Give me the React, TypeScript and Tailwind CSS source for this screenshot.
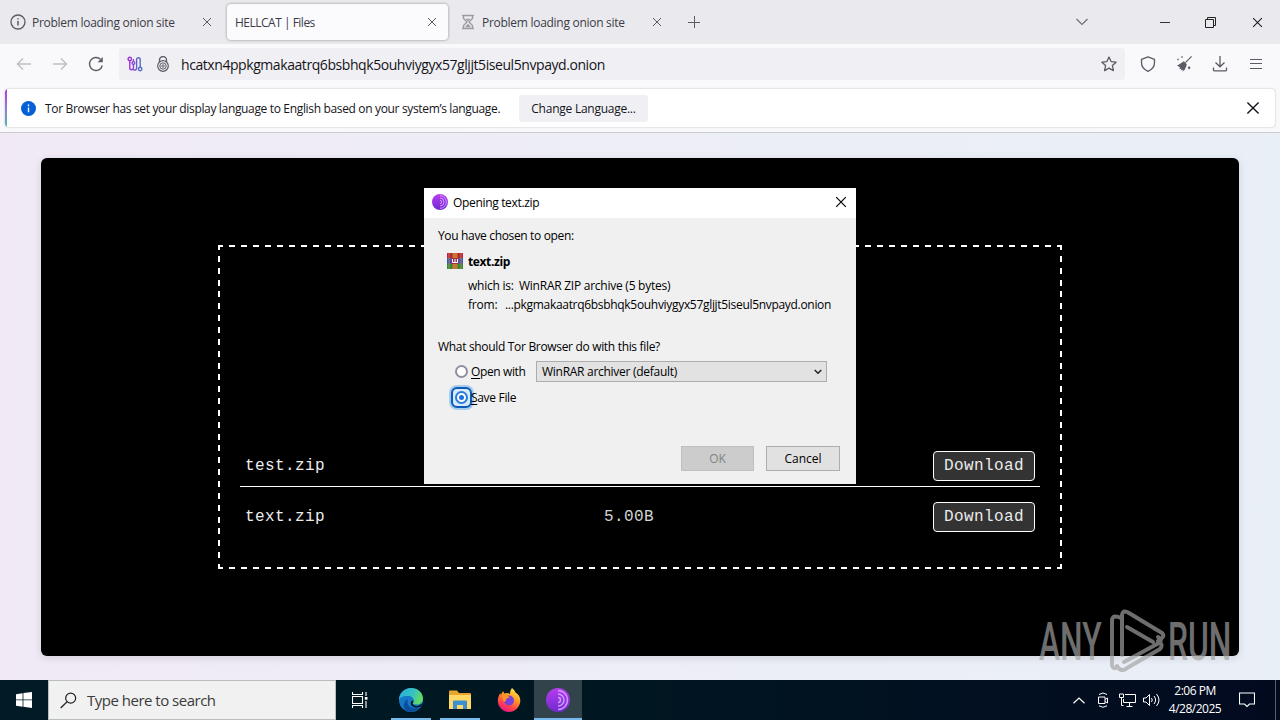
import type { ReactNode } from "react"

const address = "hcatxn4ppkgmakaatrq6bsbhqk5ouhviygyx57gljjt5iseul5nvpayd.onion"

const files = [
  { name: "test.zip", size: "" },
  { name: "text.zip", size: "5.00B" },
]

function CloseIcon({ className = "size-2.5 text-[#5b5b66]" }: { className?: string }) {
  return (
    <svg viewBox="0 0 10 10" className={className} fill="none" stroke="currentColor" strokeWidth="1">
      <path d="M1 1l8 8M9 1l-8 8" />
    </svg>
  )
}

function TorIcon({ className }: { className: string }) {
  return (
    <svg viewBox="0 0 24 24" className={className} fill="none">
      <defs>
        <linearGradient id="tor" x1="0" y1="0" x2="0" y2="1">
          <stop offset="0" stopColor="#b83cf0" />
          <stop offset="1" stopColor="#6f2ad0" />
        </linearGradient>
      </defs>
      <circle cx="12" cy="12" r="12" fill="url(#tor)" />
      <g stroke="#cf9bff" strokeWidth="1.5">
        <path d="M12 2.5a9.5 9.5 0 0 1 0 19" />
        <path d="M12 6a6 6 0 0 1 0 12" />
        <path d="M12 9.5a2.5 2.5 0 0 1 0 5" />
      </g>
    </svg>
  )
}

function TabBar() {
  return (
    <div className="flex h-11 items-center bg-[#eaeaee] text-[#3c3b46]">
      <div className="flex h-9 w-[227px] items-center pl-2.5 pr-[15px]">
        <svg viewBox="0 0 16 16" className="mr-1.5 size-4" fill="none" stroke="#5b5b66" strokeWidth="1.3">
          <circle cx="8" cy="8" r="7" />
          <path d="M8 7v4.5M8 4.2v1.4" strokeWidth="1.5" />
        </svg>
        <span className="flex-1 pt-0.5 tracking-[-0.28px]">Problem loading onion site</span>
        <CloseIcon />
      </div>
      <div className="flex h-9 w-[221px] items-center rounded bg-[#fbfbfe] pl-2 pr-[11px] shadow-[0_0_3px_rgba(0,0,0,0.4)]">
        <span className="flex-1 pt-0.5 tracking-[-0.5px]">HELLCAT | Files</span>
        <CloseIcon />
      </div>
      <div className="flex h-9 w-[226px] items-center pl-[13px] pr-3">
        <svg viewBox="0 0 14 16" className="mr-[7px] h-4 w-3.5" fill="none" stroke="#9b9ba3" strokeWidth="1.4">
          <path d="M1 1.5h12M1 14.5h12M2.5 2v2.5L6 8l-3.500 3.500V14M11.500 2v2.500L8 8l3.500 3.500V14" />
          <path d="M5 5h4L7 7zM4.500 13L7 10l2.500 3z" fill="#9b9ba3" strokeWidth=".5" />
        </svg>
        <span className="flex-1 pt-0.5 tracking-[-0.28px]">Problem loading onion site</span>
        <CloseIcon />
      </div>
      <svg viewBox="0 0 12 12" className="ml-[14px] size-3" stroke="#5b5b66" strokeWidth="1">
        <path d="M6.500 0v12M0 6.500h12" />
      </svg>
      <svg viewBox="0 0 12 8" className="ml-auto h-2 w-3" fill="none" stroke="#6f6e79" strokeWidth="1.2">
        <path d="M.5 1L6 6.500 11.500 1" />
      </svg>
      <div className="ml-[72px] h-px w-2.5 bg-[#33333d]" />
      <svg viewBox="0 0 11 11" className="ml-[35px] size-[11px]" fill="none" stroke="#222" strokeWidth="1">
        <path d="M.5 2.500h8v8h-8zM2.500 2.500v-2h8v8h-2" />
      </svg>
      <CloseIcon className="ml-9 mr-[17px] size-[11px] text-[#222]" />
    </div>
  )
}

function NavBar() {
  return (
    <div className="flex h-10 items-center bg-[#f9f9fb] text-[#5b5b66]">
      <svg viewBox="0 0 16 16" className="ml-4 size-4" fill="none" stroke="#bdbdc4" strokeWidth="1.4">
        <path d="M15 8H1.500M7 2.500L1.500 8 7 13.500" />
      </svg>
      <svg viewBox="0 0 16 16" className="ml-5 size-4" fill="none" stroke="#bdbdc4" strokeWidth="1.4">
        <path d="M1 8h13.500M9 2.500L14.500 8 9 13.500" />
      </svg>
      <svg viewBox="0 0 16 16" className="ml-5 size-4" fill="none" stroke="#5b5b66" strokeWidth="1.4">
        <path d="M14.300 9.500A6.500 6.500 0 1 1 12.500 3.300" />
        <path d="M14.800 1v5.200H9.600z" fill="#5b5b66" stroke="none" />
      </svg>
      <div className="ml-[15px] flex h-8 w-[1006px] items-center rounded-sm bg-[#f0f0f4] pl-2">
        <svg viewBox="0 0 16 16" className="size-4" fill="none" strokeWidth="1.4">
          <defs>
            <linearGradient id="circuit" gradientUnits="userSpaceOnUse" x1="0" y1="0" x2="16" y2="0">
              <stop offset="0" stopColor="#b421dc" />
              <stop offset="1" stopColor="#3f7fc0" />
            </linearGradient>
          </defs>
          <g stroke="url(#circuit)">
            <circle cx="2.800" cy="3" r="1.700" />
            <circle cx="13.200" cy="13" r="1.700" />
            <path d="M2.800 4.700v7.300a1.800 1.800 0 0 0 3.600 0V8.500M6.400 5.500V3M9.600 13.500V3.500a1.800 1.800 0 0 1 3.600 0v7.800M6.400 13.800q3.200 1 3.200-2" />
            <circle cx="6.400" cy="7" r="1.400" />
          </g>
        </svg>
        <svg viewBox="0 0 14 16" className="ml-[13px] h-4 w-3.5" fill="none" stroke="#5b5b66">
          <path d="M3.500 6V4a3.500 3.500 0 0 1 7 0v2" strokeWidth="1.3" />
          <circle cx="7" cy="10" r="5.300" strokeWidth="1.2" />
          <circle cx="7" cy="10" r="3.200" />
          <circle cx="7" cy="10" r="1.200" />
        </svg>
        <span className="ml-[11px] pt-0.5 text-[14px] tracking-[-0.43px] text-[#15141a]">{address}</span>
        <svg viewBox="0 0 16 16" className="ml-auto mr-2 size-4" fill="none" stroke="#5b5b66" strokeWidth="1.3" strokeLinejoin="round">
          <path d="M8 1l2.100 4.600 5 .6-3.700 3.400 1 5L8 12.100l-4.400 2.500 1-5L.9 6.200l5-.6z" />
        </svg>
      </div>
      <svg viewBox="0 0 16 16" className="ml-[15px] size-4" fill="none" stroke="currentColor" strokeWidth="1.3" strokeLinejoin="round">
        <path d="M8 .8l6.500 2.500v3.500c0 3.500-2.500 6.800-6.500 8.500-4-1.700-6.500-5-6.500-8.500V3.300z" />
      </svg>
      <svg viewBox="0 0 16 16" className="ml-5 size-4" fill="currentColor">
        <path d="M15.200 0l.8.8-6.200 6.200-.8-.8z" />
        <path d="M7.800 5.200l3 3-.6 2.300-1.500 3.300-2.200 1.700.2-2-2 .9.500-1.700-2 .2 1-1.500L1 9.500l2-1z" />
        <path d="M2 2.500l1 1-1 1-1-1zM6 0l1 1-1 1-1-1zM13 10l1.500 1.800L13 13.500 11.700 12z" />
      </svg>
      <svg viewBox="0 0 16 16" className="ml-5 size-4" fill="none" stroke="currentColor" strokeWidth="1.3">
        <path d="M8 0v10.500M3.500 6.500L8 10.800l4.500-4.300M1.500 11.500V14a.8.8 0 0 0 .8.8h11.400a.8.8 0 0 0 .8-.8v-2.500" />
      </svg>
      <svg viewBox="0 0 12 10" className="ml-[22px] h-2.5 w-3" stroke="currentColor" strokeWidth="1">
        <path d="M0 .5h12M0 4.500h12M0 9.500h12" />
      </svg>
    </div>
  )
}

function LanguageNotice() {
  return (
    <div className="h-[49px] border-b border-[#cccccf] bg-[#f9f9fb] px-[5px] pt-[5px]">
      <div className="flex h-[38px] items-center overflow-hidden rounded-sm bg-white text-[#15141a] shadow-[0_0_2px_rgba(58,57,68,0.35)]">
        <div className="h-full w-0.5 bg-linear-to-b from-[#b421dc] via-[#8f7bd8] to-[#39b8b8]" />
        <svg viewBox="0 0 16 16" className="ml-[14px] size-[15px]">
          <circle cx="8" cy="8" r="8" fill="#0560d8" />
          <path d="M8 7v5M8 3.800v1.700" stroke="#fff" strokeWidth="1.500" />
        </svg>
        <span className="ml-[9px] w-[474px] whitespace-nowrap pt-0.5 tracking-[-0.34px]">
          Tor Browser has set your display language to English based on your system’s language.
        </span>
        <button className="h-[27px] w-[129px] rounded-[3px] bg-[#f0f0f4] pt-0.5 tracking-[-0.25px]">Change Language...</button>
        <CloseIcon className="ml-auto mr-[15px] size-[14px] text-[#15141a]" />
      </div>
    </div>
  )
}

function FileList() {
  return (
    <div className="mt-[87px] flex h-[324px] w-[844px] flex-col">
      <div className="h-0.5 bg-[repeating-linear-gradient(90deg,#fff_0_5px,transparent_5px_11px,#fff_11px_12px)]" />
      <div className="flex h-[320px]">
        <div className="w-0.5 bg-[repeating-linear-gradient(180deg,#fff_0_3px,transparent_3px_8.85px,#fff_8.85px_11.85px)]" />
        <div className="flex flex-1 flex-col px-5 pt-[199px]">
          {files.map((file) => (
            <div
              key={file.name}
              className="grid h-[51px] grid-cols-[359px_1fr_auto] items-start border-white px-[5px] pt-[5px] font-['Liberation_Mono',monospace] text-base leading-[30px] tracking-[0.4px] text-[#ececec] not-last:h-[41px] not-last:border-b last:pt-[15px]"
            >
              <span>{file.name}</span>
              <span className="text-[#d4d4d4]">{file.size}</span>
              <button className="h-[30px] w-[102px] rounded border border-white bg-[#333] leading-7">Download</button>
            </div>
          ))}
        </div>
        <div className="w-0.5 bg-[repeating-linear-gradient(180deg,#fff_0_3px,transparent_3px_8.85px,#fff_8.85px_11.85px)]" />
      </div>
      <div className="h-0.5 bg-[repeating-linear-gradient(90deg,#fff_0_5px,transparent_5px_11px,#fff_11px_12px)]" />
    </div>
  )
}

function ArchiveIcon() {
  return (
    <svg viewBox="0 0 16 16" className="-mt-0.5 size-4">
      <path d="M0 0h16v5H0z" fill="#b3263b" />
      <path d="M0 5.500h16v5H0z" fill="#3657b5" />
      <path d="M0 11h16v5H0z" fill="#2f8a3c" />
      <path d="M0 5h16v.6H0zM0 10.500h16v.6H0z" fill="#222" />
      <path d="M5.500 0h5v16h-5z" fill="#c9772b" />
      <path d="M4.500 5h7v6h-7z" fill="#a4304c" />
      <path d="M5.500 6v3.500h5V6M8 6v3" fill="none" stroke="#fff" />
      <path d="M2 0v16M14 0v16" stroke="#e0a060" strokeWidth=".6" />
    </svg>
  )
}

function DialogButton({ children, disabled }: { children: ReactNode; disabled?: boolean }) {
  return (
    <button
      disabled={disabled}
      className="h-[25px] w-[74px] border border-[#adadad] bg-[#e1e1e1] pt-px disabled:w-[73px] disabled:border-[#bfbfbf] disabled:bg-[#ccc] disabled:text-[#838383]"
    >
      {children}
    </button>
  )
}

function OpenDialog() {
  return (
    <div className="absolute left-[424px] top-[188px] h-[296px] w-[432px] bg-[#f0f0f0] text-black">
      <div className="flex h-[30px] items-center bg-white pl-2 pr-[9px]">
        <TorIcon className="-mt-0.5 size-4" />
        <span className="ml-[5px] flex-1 tracking-[-0.33px]">Opening text.zip</span>
        <CloseIcon className="-mt-0.5 size-3 text-black" />
      </div>
      <div className="px-3.5 pt-[9px]">
        <p className="leading-[18px] tracking-[-0.34px]">You have chosen to open:</p>
        <div className="mt-2 flex items-center pl-[9px]">
          <ArchiveIcon />
          <span className="ml-[5px] font-bold leading-[18px] tracking-[-0.38px]">text.zip</span>
        </div>
        <div className="mt-[5px] flex items-baseline pl-[30px] leading-[19px]">
          <span className="w-[51px] tracking-[-0.25px]">which is:</span>
          <span className="tracking-[-0.25px]">WinRAR ZIP archive (5 bytes)</span>
        </div>
        <div className="flex items-baseline whitespace-nowrap pl-[30px] leading-[19px]">
          <span className="w-[37px] tracking-[-0.2px]">from:</span>
          <span className="tracking-[-0.31px]">...{address.slice(8)}</span>
        </div>
        <p className="mt-6 leading-[18px] tracking-[-0.32px]">What should Tor Browser do with this file?</p>
        <div className="mt-[5px] flex h-[21px] items-center pl-[17px]">
          <span className="size-[13px] rounded-full border-2 border-[#8f8f9d] bg-white" />
          <span className="ml-[3px] w-[65px] pt-px tracking-[-0.38px]">
            <u className="underline-offset-2">O</u>pen with
          </span>
          <div className="flex h-[21px] w-[291px] items-center border border-[#adadad] bg-[#e2e2e2] pl-[5px] pr-1">
            <span className="flex-1 pt-px tracking-[-0.28px]">WinRAR archiver (default)</span>
            <svg viewBox="0 0 8 6" className="h-1.5 w-2" fill="none" stroke="#222" strokeWidth="1.500">
              <path d="M.7 1L4 4.300 7.300 1" />
            </svg>
          </div>
        </div>
        <div className="mt-[5px] flex h-[21px] items-center pl-[14.5px]">
          <span className="flex size-[17px] items-center justify-center rounded-[4px] bg-[#d6eafc] outline-2 outline-[#0c5cb5] ring-4 ring-[#a9cbed]">
            <span className="flex size-[13px] items-center justify-center rounded-full border-2 border-[#2b7bd8] bg-white">
              <span className="size-[5px] rounded-full bg-[#1d72dc]" />
            </span>
          </span>
          <span className="ml-[1.5px] pt-px tracking-[-0.32px]">
            <u className="underline-offset-2">S</u>ave File
          </span>
        </div>
        <div className="mt-[38px] flex justify-end gap-3 pr-0.5">
          <DialogButton disabled>OK</DialogButton>
          <DialogButton>Cancel</DialogButton>
        </div>
      </div>
    </div>
  )
}

function Watermark() {
  return (
    <svg
      viewBox="0 0 200 64"
      className="absolute left-[1038px] top-[608px] h-16 w-[200px] font-['Roboto',sans-serif] text-[53px] font-medium"
      fill="#a3a3a3"
      opacity=".68"
    >
      <text transform="translate(1 52) scale(.6 1)">ANY</text>
      <text transform="translate(130 52) scale(.6 1)">RUN</text>
      <g fill="none" stroke="#a3a3a3" strokeWidth="4" strokeLinejoin="round" strokeLinecap="round">
        <path d="M83 10q-8-4-9 2v45q1 5 5 2" />
        <path d="M84 47V7q1-6 7-2l33 20q3 3-1 6" />
        <path d="M89 19l26 15M86 54l35-19q4-3-1-6" />
        <path d="M79 58q4 7 10 2l33-19q4-5-2-8" />
      </g>
    </svg>
  )
}

function Taskbar() {
  return (
    <div className="flex h-10 items-center bg-linear-to-r from-[#001b25] via-[#001621] to-[#030a20] text-white">
      <div className="flex h-full w-12 items-center justify-center">
        <svg viewBox="0 0 16 16" className="size-4" fill="#fff">
          <path d="M0 2.200l6.600-1v6.300H0zM7.400 1.100L16 0v7.500H7.400zM0 8.300h6.600v6.400l-6.600-1zM7.400 8.300H16V16l-8.600-1.200z" />
        </svg>
      </div>
      <div className="flex h-10 w-72 items-center border border-[#b8bdbf] bg-[#f1f1f1] pl-[11px] text-[#3b3b3b]">
        <svg viewBox="0 0 18 18" className="size-[17px]" fill="none" stroke="#222" strokeWidth="1.300">
          <circle cx="11.300" cy="6.500" r="5.300" />
          <path d="M7.500 10.300L.7 17" />
        </svg>
        <span className="ml-2.5 text-[15px] tracking-[-0.5px]">Type here to search</span>
      </div>
      <div className="flex h-full w-12 items-center justify-center">
        <svg viewBox="0 0 16 16" className="size-4" fill="none" stroke="#fff" strokeWidth="1.100">
          <path d="M.5 0v2.500h10V0M.5 16v-2.500h10V16M.5 4.500h10v7H.5zM14 0v4M14 9v7" />
          <path d="M12.800 5h2.700v2.700h-2.700z" fill="#fff" stroke="none" />
        </svg>
      </div>
      <div className="ml-[7px] flex h-full w-10 items-center justify-center border-b-2 border-[#76b9ed] pt-0.5">
        <svg viewBox="0 0 24 24" className="size-6">
          <defs>
            <linearGradient id="edgeTop" x1="0" y1="0" x2="1" y2=".3">
              <stop offset="0" stopColor="#2cabdf" />
              <stop offset=".6" stopColor="#35c1c4" />
              <stop offset="1" stopColor="#5fda67" />
            </linearGradient>
          </defs>
          <circle cx="12" cy="12" r="12" fill="#1479c9" />
          <path d="M0 12C0 5 5.500 0 12 0c7 0 12 5 12 10.500 0 4-3 6-6.500 6-2.500 0-4-1-3.500-2 1.500-2 .7-6-4-6.500C5 7.500 1 9 0 12z" fill="url(#edgeTop)" />
          <path d="M8.500 13c-.5 6 5.500 9 12.500 6-3 4-8 6-12.500 4.500C4 21.500 3 15 8.500 11z" fill="#0b4f9c" />
          <path d="M14 14.500c-1.300 2 1.500 4 5.500 3.300L24 15l-2.500 3.500c-4 2-9.500 1-9.800-3.500.2-2 2.300-3 2.800-2 .1 1-.5 1-.5 1.500z" fill="#001621" />
        </svg>
      </div>
      <div className="ml-[9px] flex h-full w-10 items-center justify-center border-b-2 border-[#76b9ed] pt-0.5">
        <svg viewBox="0 0 22 20" className="h-5 w-[22px]">
          <path d="M0 1.500Q0 .5 1 .5h7l2 2.500h11q1 0 1 1v4H0z" fill="#e6a52c" />
          <path d="M0 5h22v14H0z" fill="#ffd865" />
          <path d="M4 11.500q0-1 1-1h12q1 0 1 1V19h-4v-4H8v4H4z" fill="#3e8fcf" />
        </svg>
      </div>
      <div className="ml-[9px] flex h-full w-10 items-center justify-center">
        <svg viewBox="0 0 24 24" className="size-6">
          <defs>
            <linearGradient id="fox" x1=".8" y1="0" x2=".3" y2="1">
              <stop offset="0" stopColor="#fff04a" />
              <stop offset=".4" stopColor="#ff9a25" />
              <stop offset=".75" stopColor="#ff3d50" />
              <stop offset="1" stopColor="#e3148a" />
            </linearGradient>
          </defs>
          <path d="M15 0c2 1.500 3 3 3.500 4.500 3 1.500 5 5 4.800 8.500C23 19 18 24 12 24S.8 19 .8 13c0-3 1-6 2.500-8l.5 2L6 3l1.300 2.500c2-1 4-.5 5.700.5 0-3 .8-4.500 2-6z" fill="url(#fox)" />
          <circle cx="12" cy="12.500" r="5" fill="#7a3fd8" />
          <path d="M5 7c3-1 5 0 8 2.500-2 .5-4 .5-4 2.500S7 14 6.500 13 5 9 5 7z" fill="#ff9226" />
        </svg>
      </div>
      <div className="ml-[5px] flex h-full w-12 items-center justify-center border-b-2 border-[#76b9ed] bg-[#33434c] pt-0.5">
        <TorIcon className="size-6" />
      </div>
      <svg viewBox="0 0 12 7" className="ml-auto h-[7px] w-3" fill="none" stroke="#fff" strokeWidth="1.200">
        <path d="M.5 6.300L6 1l5.500 5.300" />
      </svg>
      <svg viewBox="0 0 12 16" className="ml-3 h-4 w-3" fill="none" stroke="#fff">
        <path d="M1.500 5h6.500v6.500H1.500zM8 7.500L10.500 6v5L8 9.500M2 2.500q4-3 8 0M2 13.800q4 3 8 0" />
      </svg>
      <svg viewBox="0 0 17 14" className="ml-2.5 h-3.5 w-[17px]" fill="none" stroke="#fff">
        <path d="M6 1.500h10.500v8H4.500V6M7.500 13.500h6M10.500 9.500v4M.5 1h4v3.500h-4zM2.500 4.500v8h2" />
      </svg>
      <svg viewBox="0 0 17 14" className="ml-[7px] h-3.5 w-[17px]" fill="none" stroke="#fff">
        <path d="M.5 5v4h2.500l3.500 3.500V1.500L3 5zM8.500 5q1.500 2 0 4M11 3q3.200 4 0 8M13.500 1q5 6 0 12" />
      </svg>
      <div className="ml-[7px] w-[56px] whitespace-nowrap text-center leading-[18px] tracking-[-0.5px]">
        <div>2:06 PM</div>
        <div>4/28/2025</div>
      </div>
      <svg viewBox="0 0 16 16" className="ml-4 size-4" fill="none" stroke="#fff" strokeWidth="1.100">
        <path d="M.5 1h15v11h-5L8 14.500 5.500 12h-5z" />
      </svg>
      <div className="ml-5 mr-[4px] h-full w-px bg-[#59616f]" />
    </div>
  )
}

export default function App() {
  return (
    <div className="relative flex h-[720px] w-[1280px] flex-col overflow-hidden font-['Open_Sans',sans-serif] text-xs">
      <TabBar />
      <NavBar />
      <LanguageNotice />
      <main className="flex flex-1 justify-center bg-linear-to-r from-[#f1eaf6] via-[#edeef7] to-[#e9eff7] pt-[25px]">
        <div className="flex h-[498px] w-[1198px] justify-center rounded-md bg-black shadow-[0_2px_8px_rgba(0,0,0,0.12)]">
          <FileList />
        </div>
      </main>
      <Taskbar />
      <OpenDialog />
      <Watermark />
    </div>
  )
}
